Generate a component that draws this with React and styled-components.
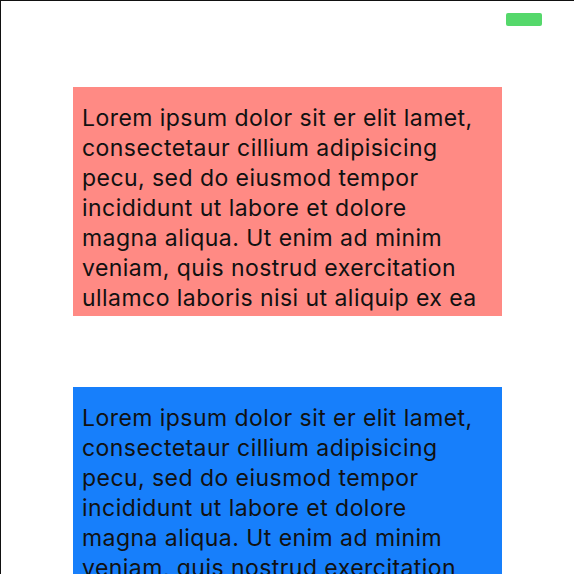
import React from "react";
import styled, { createGlobalStyle } from "styled-components";

const Global = createGlobalStyle`
  html, body { margin: 0; padding: 0; background: #fff; }
  body { font-family: Inter, "Noto Sans", "Liberation Sans", sans-serif; }
`;

const Screen = styled.div`
  box-sizing: border-box;
  width: 574px;
  height: 574px;
  overflow: hidden;
  border-top: 1px solid #111;
  border-left: 1px solid #111;
  display: flex;
  flex-direction: column;
`;

const TopBar = styled.div`
  display: flex;
  justify-content: flex-end;
  padding: 12px 32px 0 0;
`;

const Indicator = styled.div`
  width: 36px;
  height: 13px;
  border-radius: 2px;
  background: #55d86b;
`;

const Content = styled.div`
  display: flex;
  flex-direction: column;
  gap: 71px;
  padding: 61px 0 0 72px;
`;

const Card = styled.div`
  box-sizing: border-box;
  width: 429px;
  height: 229px;
  flex-shrink: 0;
  overflow: hidden;
  padding: 16px 18px 0 9px;
  background: ${(p) => p.$bg};
  color: #111;
  font-size: 23px;
  line-height: 30px;
  letter-spacing: 0.45px;
`;

const text =
  "Lorem ipsum dolor sit er elit lamet, consectetaur cillium adipisicing pecu, sed do eiusmod tempor incididunt ut labore et dolore magna aliqua. Ut enim ad minim veniam, quis nostrud exercitation ullamco laboris nisi ut aliquip ex ea";

export default function App() {
  return (
    <>
      <Global />
      <Screen>
        <TopBar>
          <Indicator />
        </TopBar>
        <Content>
          <Card $bg="#ff8a84">{text}</Card>
          <Card $bg="#177ffb">{text}</Card>
        </Content>
      </Screen>
    </>
  );
}
